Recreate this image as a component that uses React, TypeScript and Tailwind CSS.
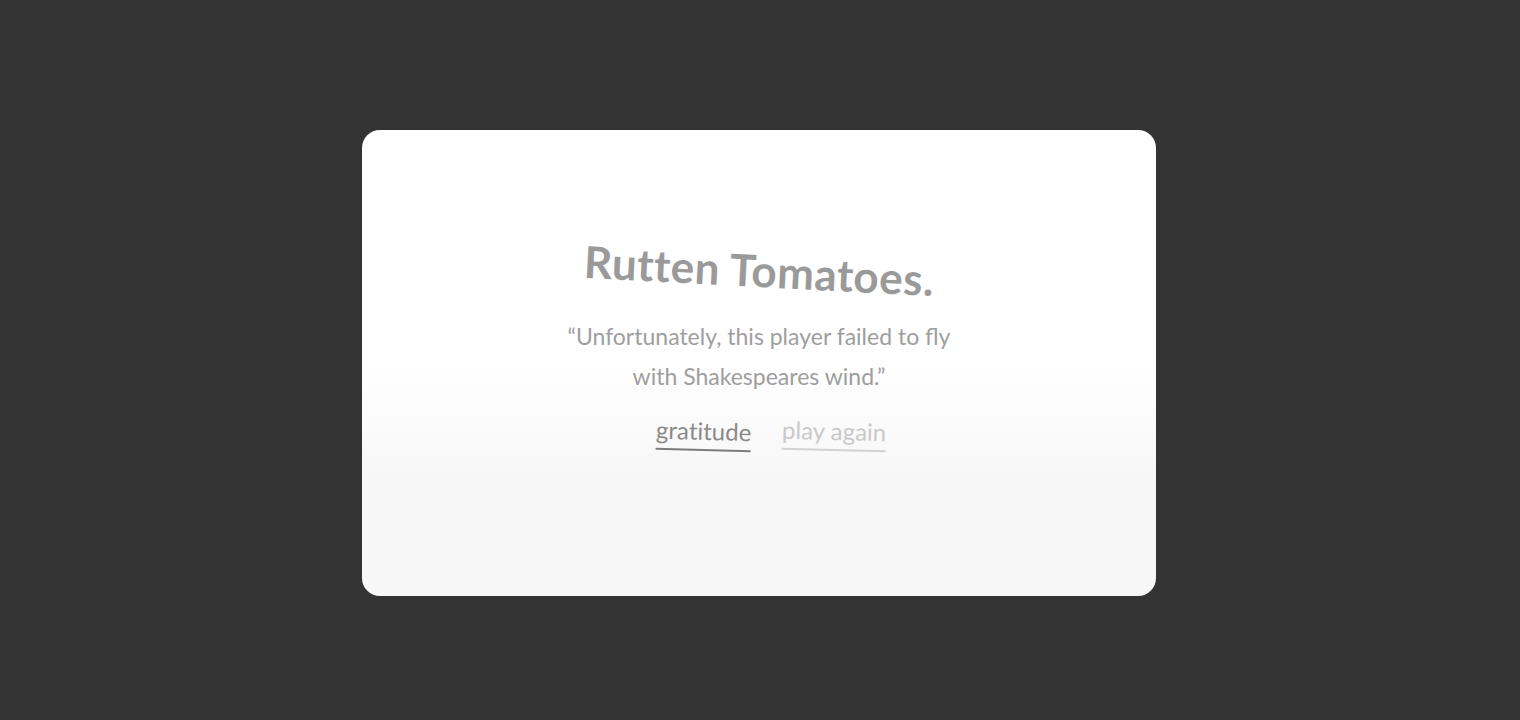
import React from 'react';

const font = { fontFamily: 'Lato, "Noto Sans", sans-serif' };

export default function App() {
  return (
    <div className="min-h-screen w-full bg-[#333333] flex justify-center pt-[130px] pr-[2px]" style={font}>
      <div className="w-[794px] h-[466px] rounded-[18px] bg-gradient-to-b from-white from-[50%] to-[#f7f7f7] to-[75%] flex flex-col items-center pt-[108px]">
        <h1 className="text-[44px] font-bold text-[#9a9a9a] leading-[64px] rotate-[3deg] tracking-[0.5px]">
          Rutten Tomatoes.
        </h1>
        <p className="mt-[14px] text-[23px] leading-[40px] text-[#9e9e9e] text-center">
          “Unfortunately, this player failed to fly
          <br />
          with Shakespeares wind.”
        </p>
        <div className="mt-[20px] ml-[24px] flex gap-[30px] text-[24px] leading-[30px] [font-variant-ligatures:none]">
          <span className="text-[#8a8a8a] border-b-2 border-[#7c7c7c] pb-[3px] rotate-[1.5deg]">gratitude</span>
          <span className="text-[#c9c9c9] border-b-2 border-[#d2d2d2] pb-[3px] rotate-[1.5deg]">play again</span>
        </div>
      </div>
    </div>
  );
}
